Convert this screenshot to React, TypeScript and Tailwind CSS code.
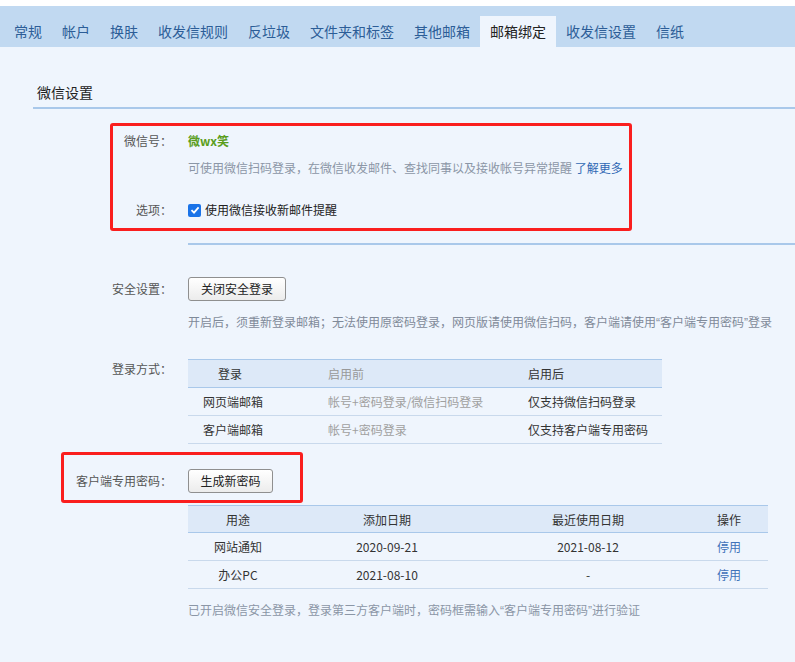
import React from 'react';

const tabs = ['常规', '帐户', '换肤', '收发信规则', '反垃圾', '文件夹和标签', '其他邮箱', '邮箱绑定', '收发信设置', '信纸'];

const font = { fontFamily: '"Noto Sans CJK SC", "Noto Sans", sans-serif' };

function Label({ children }: { children: React.ReactNode }) {
  return <div className="w-[172px] shrink-0 text-right text-[12px] leading-[20px] text-[#555]">{children}</div>;
}

function Btn({ children, className = '' }: { children: React.ReactNode; className?: string }) {
  return (
    <button
      className={
        'h-[24px] rounded-[3px] border border-[#8f8f8f] bg-gradient-to-b from-white to-[#ececec] text-[12px] leading-[22px] text-[#222] ' +
        className
      }
    >
      {children}
    </button>
  );
}

// 窄引号
function Q({ children }: { children: React.ReactNode }) {
  return <span className="font-['Liberation_Sans',sans-serif]">{children}</span>;
}

export default function App() {
  return (
    <div className="relative min-h-[662px] w-[795px] overflow-hidden bg-[#eff5fd]" style={font}>
      <div className="h-[6px] bg-white" />
      {/* 标签栏 */}
      <div className="flex h-[41px] items-end bg-[#c1d9f1] pl-[4px]">
        {tabs.map((t) => (
          <div
            key={t}
            className={
              'flex h-[31px] items-center px-[10px] text-[14px] ' +
              (t === '邮箱绑定' ? 'bg-[#eff5fd] text-[#222]' : 'text-[#2c5d97]')
            }
          >
            {t}
          </div>
        ))}
      </div>

      {/* 微信设置 */}
      <div className="ml-[33px] mt-[35px] border-b-2 border-[#a9c8ea] pb-[5px] pl-[4px] text-[14px] leading-[20px] text-[#222]">
        微信设置
      </div>

      <div className="mt-[22px] flex">
        <Label>微信号：</Label>
        <div className="ml-[16px] text-[12px] font-bold leading-[20px] text-[#5a9e1c]">微wx笑</div>
      </div>
      <div className="ml-[188px] mt-[7px] text-[12px] leading-[20px] text-[#8b96a6]">
        可使用微信扫码登录，在微信收发邮件、查找同事以及接收帐号异常提醒 <span className="text-[#2f68b4]">了解更多</span>
      </div>
      <div className="mt-[22px] flex items-center">
        <Label>选项：</Label>
        <div className="ml-[16px] flex items-center text-[12px] leading-[20px] text-[#222]">
          <span className="flex h-[13px] w-[13px] items-center justify-center rounded-[2px] bg-[#1a73e8]">
            <svg width="10" height="10" viewBox="0 0 10 10">
              <path d="M1.5 5.2 L4 7.6 L8.6 2.4" fill="none" stroke="white" strokeWidth="1.8" />
            </svg>
          </span>
          <span className="ml-[4px]">使用微信接收新邮件提醒</span>
        </div>
      </div>
      <div className="ml-[188px] mt-[23px] h-[2px] bg-[#a9c8ea]" />

      {/* 安全设置 */}
      <div className="mt-[32px] flex items-center">
        <Label>安全设置：</Label>
        <Btn className="ml-[16px] w-[98px]">关闭安全登录</Btn>
      </div>
      <div className="ml-[188px] mt-[11px] text-[12px] leading-[20px] text-[#7f8a99]">
        开启后，须重新登录邮箱；无法使用原密码登录，网页版请使用微信扫码，客户端请使用<Q>“</Q>客户端专用密码<Q>”</Q>登录
      </div>

      <div className="mt-[26px] flex items-start">
        <Label>登录方式：</Label>
        <div className="ml-[16px] w-[474px] text-[12px] text-[#333]">
          <div className="flex h-[29px] items-center border-y border-[#a9c8ea] bg-[#dde9f8] pt-[1px]">
            <div className="w-[140px] pl-[30px]">登录</div>
            <div className="w-[200px] text-[#999]">启用前</div>
            <div>启用后</div>
          </div>
          {[
            ['网页端邮箱', '帐号+密码登录/微信扫码登录', '仅支持微信扫码登录'],
            ['客户端邮箱', '帐号+密码登录', '仅支持客户端专用密码'],
          ].map((r) => (
            <div key={r[0]} className="flex h-[28px] items-center border-b border-[#c9d9ec]">
              <div className="w-[140px] pl-[15px]">{r[0]}</div>
              <div className="w-[200px] text-[#a0a0a0]">{r[1]}</div>
              <div>{r[2]}</div>
            </div>
          ))}
        </div>
      </div>

      {/* 客户端专用密码 */}
      <div className="mt-[25px] flex items-center">
        <Label>客户端专用密码：</Label>
        <Btn className="ml-[16px] w-[85px]">生成新密码</Btn>
      </div>
      <div className="ml-[188px] mt-[12px] w-[580px] text-[12px] text-[#333]">
        <div className="flex h-[28px] items-center border-y border-[#a9c8ea] bg-[#dde9f8] pt-[1px] text-center">
          <div className="w-[100px]">用途</div>
          <div className="w-[198px]">添加日期</div>
          <div className="w-[204px]">最近使用日期</div>
          <div className="w-[78px]">操作</div>
        </div>
        {[
          ['网站通知', '2020-09-21', '2021-08-12'],
          ['办公PC', '2021-08-10', '-'],
        ].map((r) => (
          <div key={r[0]} className="flex h-[28px] items-center border-b border-[#c9d9ec] text-center">
            <div className="w-[100px]">{r[0]}</div>
            <div className="w-[198px]">{r[1]}</div>
            <div className="w-[204px]">{r[2]}</div>
            <div className="w-[78px] text-[#3f72b9]">停用</div>
          </div>
        ))}
      </div>
      <div className="ml-[188px] mt-[11px] text-[12px] leading-[20px] text-[#8b96a6]">
        已开启微信安全登录，登录第三方客户端时，密码框需输入<Q>“</Q>客户端专用密码<Q>”</Q>进行验证
      </div>

      {/* 红框标注 */}
      <div className="pointer-events-none absolute left-[110px] top-[123px] h-[108px] w-[522px] rounded-[3px] border-[3px] border-[#fa1e1e]" />
      <div className="pointer-events-none absolute left-[61px] top-[452px] h-[51px] w-[242px] rounded-[3px] border-[3px] border-[#fa1e1e]" />
    </div>
  );
}
